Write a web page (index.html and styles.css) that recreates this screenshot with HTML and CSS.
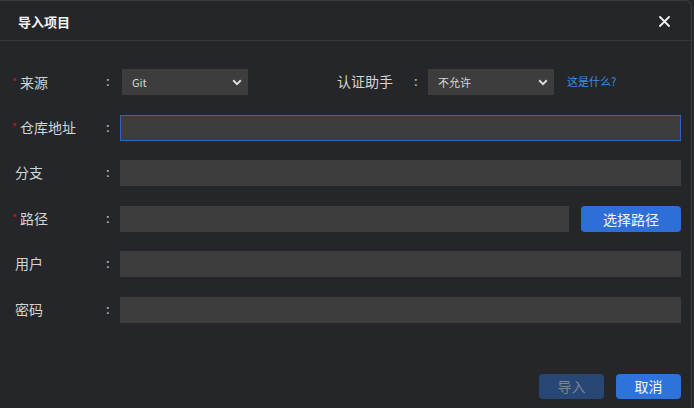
FILE: index.html
```html
<!DOCTYPE html>
<html lang="zh">
<head>
<meta charset="utf-8">
<link rel="stylesheet" href="styles.css">
</head>
<body>
<div class="dialog">
  <div class="header">
    <span class="title">导入项目</span>
    <svg class="close" width="11" height="11" viewBox="0 0 11 11"><path d="M1 1L10 10M10 1L1 10" stroke="#f2f2f2" stroke-width="1.8" stroke-linecap="round"/></svg>
  </div>
  <div class="form">
    <div class="row">
      <div class="label req"><span class="star">*</span>来源</div>
      <div class="colon">:</div>
      <div class="select sel-src"><span>Git</span><svg width="10" height="7" viewBox="0 0 10 7"><path d="M1.2 1.3L5 5.1L8.8 1.3" fill="none" stroke="#dcdcdc" stroke-width="2"/></svg></div>
      <div class="label label2">认证助手</div>
      <div class="colon">:</div>
      <div class="select sel-auth"><span>不允许</span><svg width="10" height="7" viewBox="0 0 10 7"><path d="M1.2 1.3L5 5.1L8.8 1.3" fill="none" stroke="#dcdcdc" stroke-width="2"/></svg></div>
      <a class="link">这是什么?</a>
    </div>
    <div class="row">
      <div class="label req"><span class="star">*</span>仓库地址</div>
      <div class="colon">:</div>
      <div class="input focused"></div>
    </div>
    <div class="row">
      <div class="label">分支</div>
      <div class="colon">:</div>
      <div class="input"></div>
    </div>
    <div class="row">
      <div class="label req"><span class="star">*</span>路径</div>
      <div class="colon">:</div>
      <div class="input"></div>
      <button class="btn btn-path">选择路径</button>
    </div>
    <div class="row">
      <div class="label">用户</div>
      <div class="colon">:</div>
      <div class="input"></div>
    </div>
    <div class="row">
      <div class="label">密码</div>
      <div class="colon">:</div>
      <div class="input"></div>
    </div>
  </div>
  <div class="footer">
    <button class="btn btn-disabled">导入</button>
    <button class="btn btn-primary">取消</button>
  </div>
</div>
</body>
</html>
```
FILE: styles.css
```css
html, body {
  margin: 0;
  padding: 0;
  background: #252629;
  font-family: "Noto Sans CJK SC", "Noto Sans", sans-serif;
}
.dialog {
  width: 692px;
  height: 420px;
  background: #252629;
  border-top: 1px solid #3a3b3e;
  border-right: 1px solid #3a3b3e;
  border-radius: 0 7px 0 0;
  box-sizing: border-box;
  overflow: hidden;
}
.header {
  height: 39px;
  border-bottom: 1px solid #38393c;
  display: flex;
  align-items: center;
  justify-content: space-between;
  padding: 0 21px 0 18px;
}
.title {
  color: #f2f2f2;
  font-size: 13px;
  font-weight: bold;
  line-height: 1;
  margin-top: 1px;
}
.close {
  display: block;
  margin-top: 1px;
}
.form {
  padding: 28px 10px 0 0;
  display: flex;
  flex-direction: column;
  gap: 19.6px;
}
.row {
  display: flex;
  align-items: center;
  height: 26px;
}
.row > * {
  flex-shrink: 0;
}
.label {
  width: 91px;
  padding-left: 15px;
  color: #d4d4d4;
  font-size: 14px;
  line-height: 24px;
  padding-bottom: 2px;
  white-space: nowrap;
}
.label.req {
  width: 94px;
  padding-left: 12px;
}
.star {
  color: #c81818;
  font-size: 11px;
  display: inline-block;
  width: 8px;
  vertical-align: 2px;
}
.colon {
  width: 14px;
  color: #c8c8c8;
  font-size: 13px;
  line-height: 24px;
  padding-bottom: 2px;
  box-sizing: border-box;
}
.select {
  height: 26px;
  background: #3d3d3d;
  display: flex;
  align-items: center;
  justify-content: space-between;
  padding: 0 6px 0 10px;
  box-sizing: border-box;
  color: #d8d8d8;
  font-size: 11px;
}
.sel-src {
  width: 126px;
  margin-left: 2px;
}
.sel-auth {
  width: 126px;
}
.label2 {
  width: 77px;
  padding-left: 89px;
}
.link {
  color: #3a8fe8;
  font-size: 11px;
  margin-left: 13px;
  margin-top: -2px;
}
.row > .input {
  flex: 1 1 0;
  height: 26px;
  background: #3d3d3d;
  box-sizing: border-box;
}
.input.focused {
  border: 1px solid #2f62c9;
}
.btn {
  border: none;
  border-radius: 4px;
  font-family: "Noto Sans CJK SC", "Noto Sans", sans-serif;
  font-size: 14px;
  padding: 0;
  height: 26px;
}
.btn-path {
  width: 100px;
  margin-left: 12px;
  background: #2d6fd6;
  color: #f4f6fa;
}
.footer {
  display: flex;
  justify-content: flex-end;
  gap: 12px;
  padding: 51px 10px 0 0;
}
.btn-disabled {
  width: 65px;
  height: 25px;
  background: #284775;
  color: #7b8597;
}
.btn-primary {
  width: 65px;
  height: 25px;
  background: #2e73da;
  color: #f4f6fa;
}
```
